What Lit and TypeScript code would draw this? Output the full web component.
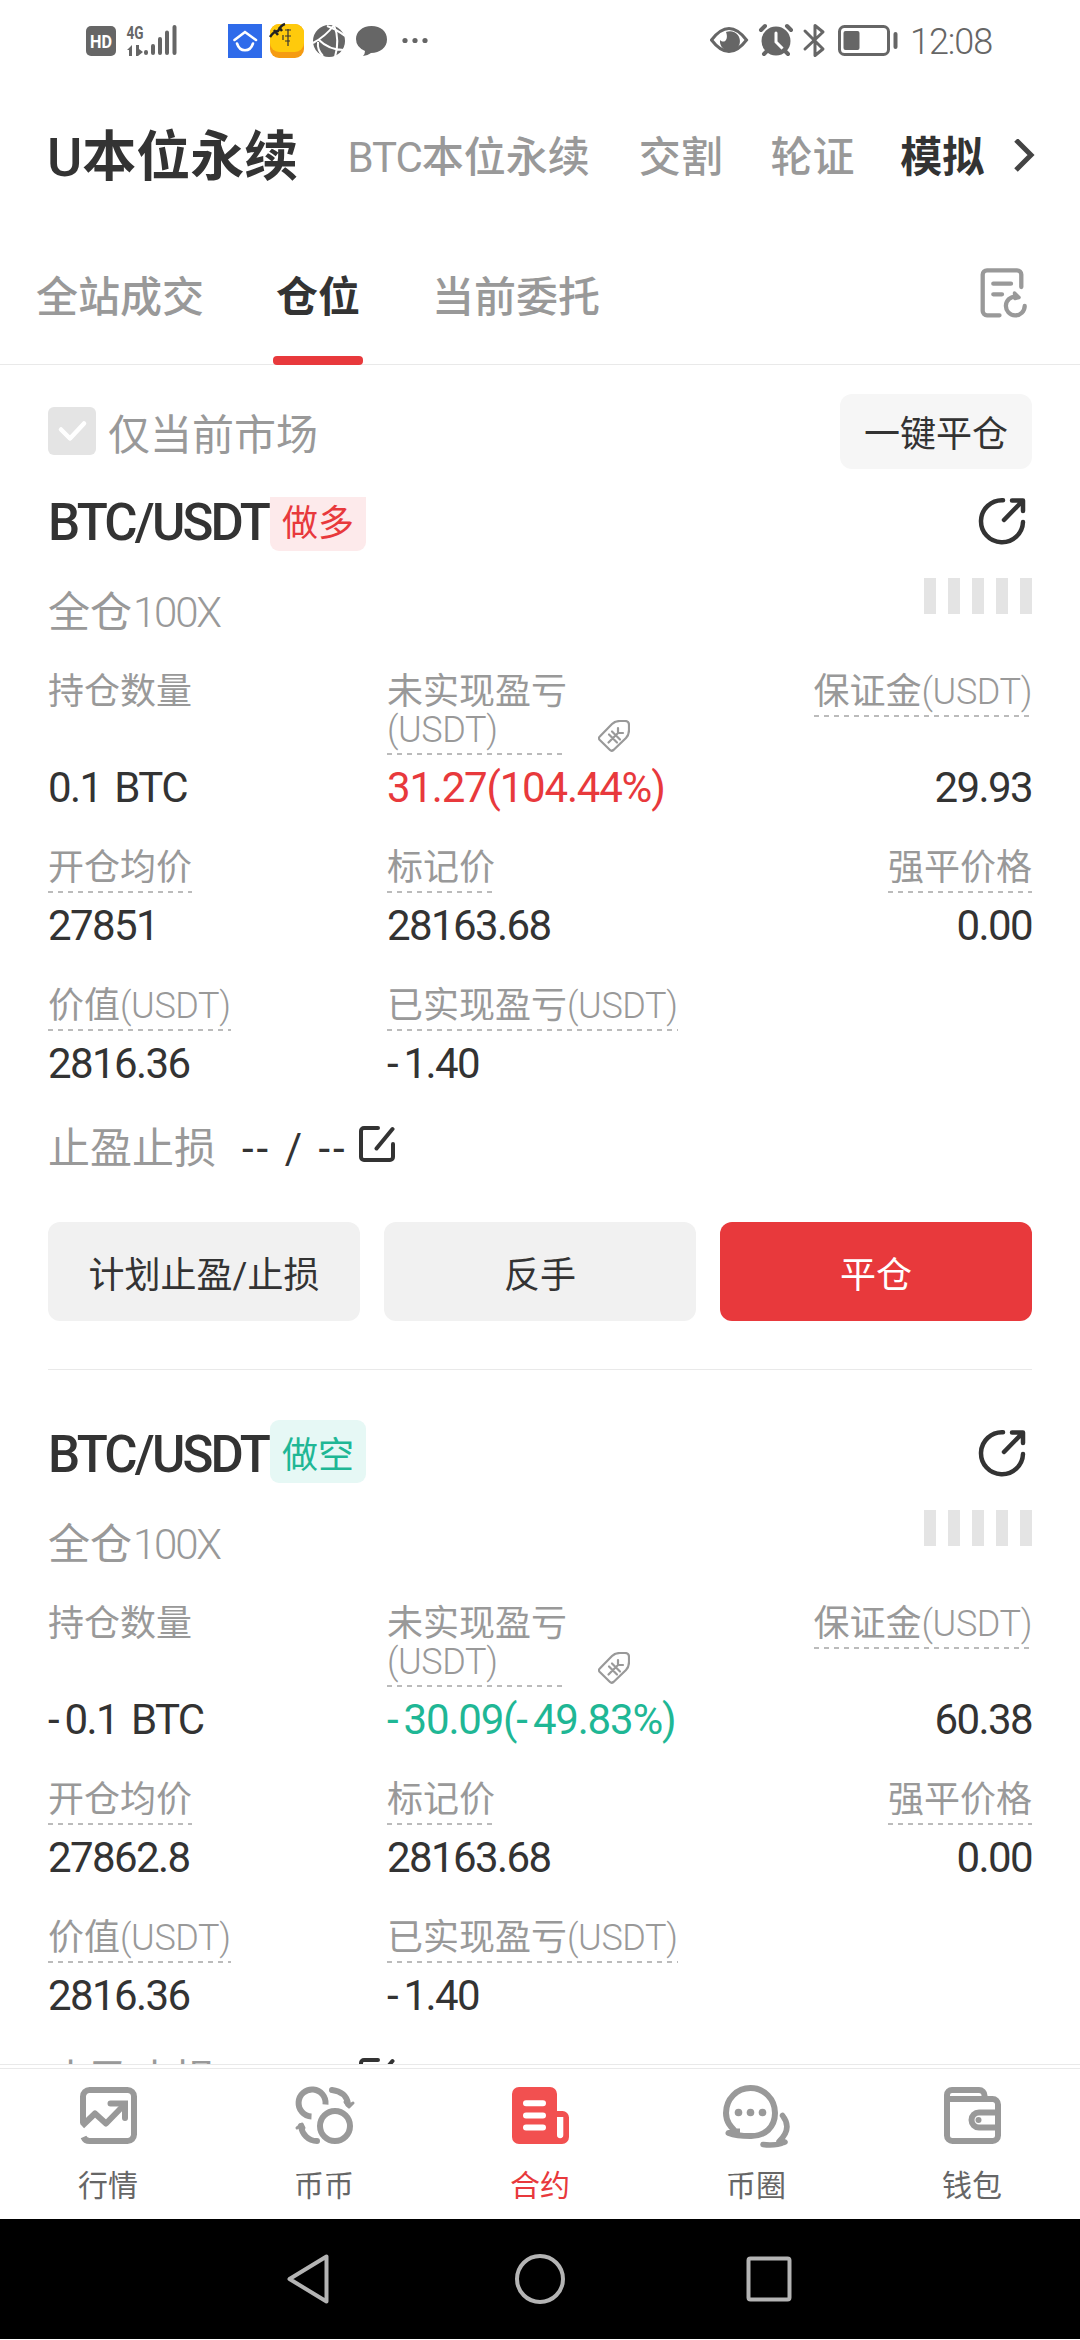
import { LitElement, html, svg, css } from "lit";
import { customElement, property } from "lit/decorators.js";

interface Position {
  side: "long" | "short";
  sideText: string;
  amount: string;
  pnl: string;
  margin: string;
  entry: string;
  mark: string;
  liquidation: string;
  worth: string;
  realised: string;
}

const POSITIONS: Position[] = [
  {
    side: "long", sideText: "做多", amount: "0.1 BTC", pnl: "31.27(104.44%)", margin: "29.93",
    entry: "27851", mark: "28163.68", liquidation: "0.00", worth: "2816.36", realised: "-1.40",
  },
  {
    side: "short", sideText: "做空", amount: "-0.1 BTC", pnl: "-30.09(-49.83%)", margin: "60.38",
    entry: "27862.8", mark: "28163.68", liquidation: "0.00", worth: "2816.36", realised: "-1.40",
  },
];

const NAV = [
  {
    label: "行情",
    icon: svg`<path d="M11 43V16.500a6.500 6.500 0 0 1 6.500-6.500h38a6.500 6.500 0 0 1 6.500 6.500v38a6.500 6.500 0 0 1-6.500 6.500h-38a6.500 6.500 0 0 1-6-4"/>
      <path d="M10 46L23 33.500 34 43.500 52 25" stroke-linejoin="round"/>
      <path d="M38.500 23.500H53V38" stroke-linecap="round"/>`,
  },
  {
    label: "币币",
    icon: svg`<path d="M37.500 24.500A13.500 13.500 0 1 0 23.500 36.500"/>
      <circle cx="47" cy="46" r="15"/>
      <path d="M44 10C53 11 59 16 60 24M29 61C20 61 14 54 13 46" stroke-linecap="round"/>
      <path d="M57 22l3 4 5-3-4 4zM16 48l-2-4-5 4 4-2z" stroke-width="3" stroke-linejoin="round"/>`,
  },
  {
    label: "合约",
    icon: svg`<path d="M15 7H46a7 7 0 0 1 7 7V31H58.500a6.500 6.500 0 0 1 6.500 6.500V57a7 7 0 0 1-7 7H15a7 7 0 0 1-7-7V14a7 7 0 0 1 7-7z" fill="currentColor" stroke="none"/>
      <path d="M22 23.300H39M22 35.500H39M22 47.500H39" stroke="#fff" stroke-linecap="round"/>
      <path d="M53 37h6.300v18a3.150 3.150 0 0 1-6.300 0z" fill="#fff" stroke="none"/>`,
    active: true,
  },
  {
    label: "币圈",
    icon: svg`<path d="M15 51C11 47 6 42 6 33 6 19 17 8 30.500 8S55 19 55 33 45 56.500 30 56C21 56 14 55 8.500 53 12 53 16 52.500 17 52V48.500" stroke-linejoin="round"/>
      <path d="M62.500 35.500C70 45 67 54 59 61.500c2 1.500 4 1.500 6 .5-7 3-15 3.500-22 2.500" stroke-width="5.500" stroke-linecap="round" stroke-linejoin="round"/>
      <g fill="currentColor" stroke="none"><circle cx="18.500" cy="32.500" r="3.800"/><circle cx="30.500" cy="32.500" r="3.800"/><circle cx="42.500" cy="32.500" r="3.800"/></g>`,
  },
  {
    label: "钱包",
    icon: svg`<path d="M11 19V15a5 5 0 0 1 5-5H43a5.500 5.500 0 0 1 5.500 5.500v3.500M11 19H56.500a5.500 5.500 0 0 1 5.500 5.500V55.500a5.500 5.500 0 0 1-5.500 5.500H16.500a5.500 5.500 0 0 1-5.500-5.500z"/>
      <path d="M61 32.500H43a7.500 7.500 0 0 0 0 15H61"/>
      <circle cx="42.500" cy="40" r="3" fill="currentColor" stroke="none"/>`,
  },
];

/** Latin runs are set tighter than the Chinese text around them. */
const latin = (text: string) => html`<span class="latin">${text}</span>`;

/** Figures with a widened minus sign. */
const figure = (text: string) =>
  text.split("-").map((part, i) => (i ? html`<span class="minus">-</span>${part}` : part));

const base = css`
  * { box-sizing: border-box; }
  svg { display: block; flex: none; }
`;

@customElement("status-bar")
class StatusBar extends LitElement {
  static styles = [base, css`
    :host { display: flex; justify-content: space-between; height: 80px; padding: 20px 88px 0 86px; color: #666; }
    .side { display: flex; height: 42px; }
    .clock { font-size: 36px; line-height: 45px; letter-spacing: -1.1px; margin-left: 12px; font-weight: 300; }
    .net { font: 700 19px/19px Roboto, sans-serif; }
  `];
  render() {
    return html`
      <div class="side">
        <svg width="344" height="42" viewBox="0 0 344 42" fill="currentColor">
          <rect x="0" y="6" width="30" height="30" rx="5"/>
          <text x="15" y="27.500" text-anchor="middle" fill="#fff" font-family="Roboto" font-weight="700" font-size="18" textLength="22" lengthAdjust="spacingAndGlyphs">HD</text>
          <text x="40.500" y="18.500" class="net" textLength="17" lengthAdjust="spacingAndGlyphs">4G</text>
          <path d="M41 30l5-5v11h-3v-6zM50 25h3v4l4 3-5 4h-2z"/>
          <g stroke="currentColor" stroke-width="4" stroke-linecap="round">
            <path d="M60 32v1M67 26v7M74 19v14M81 12.500v20.500M88.500 7v26"/>
          </g>
          <rect x="142" y="4" width="34" height="34" fill="#2f6bea"/>
          <g fill="none" stroke="#fff" stroke-width="2.600" stroke-linecap="round">
            <path d="M148.500 20L159 12l11 8"/><path d="M151 23.500c3 9 13 9 16 0"/>
          </g>
          <rect x="184" y="4" width="34" height="34" rx="9" fill="#f59b12"/>
          <rect x="184" y="4" width="34" height="28" rx="9" fill="#ffca0c"/>
          <path d="M184 17q4-6 8-6 3-6 7-7M188 10l4 5M193 7l3 4" stroke="#222" stroke-width="2.500" fill="none"/>
          <path d="M199 10h6M202 9v17M199 16h6M197 15v5M199 21h5" stroke="#333" stroke-width="1.200" fill="none"/>
          <circle cx="243" cy="21" r="16"/>
          <g fill="none" stroke="#fff" stroke-width="2"><path d="M227 23Q240 16 248 5M248 5Q254 20 249 37M233 20Q243 30 258 30M241 6Q250 9 259 16M232 22Q231 30 237 36"/></g>
          <path d="M285.500 6C295 6 301 11.500 301 19.500S294 33 285 33q-4 3-8 3 2-2 2-5-9-4-9-12c0-7 6-13 15.500-13z"/>
          <circle cx="319" cy="20.500" r="2.600"/><circle cx="329" cy="20.500" r="2.600"/><circle cx="339" cy="20.500" r="2.600"/>
        </svg>
      </div>
      <div class="side">
        <svg width="188" height="42" viewBox="0 0 188 42" fill="none" stroke="currentColor" stroke-width="3">
          <path d="M1.500 20Q19-3 36.500 20 19 43 1.500 20z"/>
          <path d="M16 12a10 10 0 1 1-6 8c4 4 9 0 6-8z" fill="currentColor" stroke="none"/>
          <circle cx="66" cy="21" r="14.500" fill="currentColor" stroke="none"/>
          <path d="M66 13v9l6 6" stroke="#fff" stroke-linecap="round"/>
          <path d="M51 10l4-4M77 6l4 4M54 34l4-4M78 34l-4-4" stroke-width="4" stroke-linecap="round"/>
          <path d="M95 11l18 18-8 6.500V5.500l8 6.500-18 17" stroke-linejoin="round" stroke-linecap="round"/>
          <rect x="129.500" y="6.500" width="49" height="28" rx="5"/>
          <rect x="133.500" y="11" width="16" height="19" rx="2" fill="currentColor" stroke="none"/>
          <rect x="183.500" y="12" width="4" height="17" rx="2" fill="currentColor" stroke="none"/>
        </svg>
        <span class="clock">12:08</span>
      </div>`;
  }
}

@customElement("position-card")
class PositionCard extends LitElement {
  @property({ attribute: false }) position!: Position;

  static styles = [base, css`
    :host { display: block; height: 932px; color: #333; }
    .title, .leverage-row, .tpsl, .buttons { display: flex; }
    .title { height: 63px; }
    .pair { width: 222px; padding: 6px 0 0; font-size: 51px; line-height: 57px; font-weight: 500; letter-spacing: -2.8px; white-space: nowrap; }
    .tag { height: 63px; width: 96px; border-radius: 9px; padding-top: 5px; text-align: center; font-size: 36px; line-height: 63px; }
    .long .tag { background: #fdeaeb; color: #e8393c; }
    .short .tag { background: #e6f8f5; color: #1fb795; }
    .long .pnl { color: #e8393c; }
    .short .pnl { color: #1fb795; }
    .share { margin: 9px 6px 0 auto; }
    .leverage-row { justify-content: space-between; margin-top: 27px; height: 70px; }
    .leverage { color: #999; font-size: 42px; line-height: 70px; }
    .leverage .latin { font-weight: 300; letter-spacing: -2.2px; margin-left: 1px; }
    .bars { display: flex; gap: 12px; height: 36px; }
    .bar { width: 12px; background: #e4e4e4; }
    .grid { display: grid; grid-template-columns: 339px 339px 1fr; row-gap: 35px; margin-top: 24px; }
    .cell { display: flex; flex-direction: column; align-items: flex-start; justify-content: space-between; }
    .cell.end { align-items: flex-end; }
    .label-row { display: flex; align-items: flex-end; }
    .label { color: #999; font-size: 36px; line-height: 38px; padding: 1px 0 6px; white-space: nowrap; }
    .label .latin { font-weight: 300; letter-spacing: -.4px; }
    .hint { background: repeating-linear-gradient(90deg, #bbb 0 5px, transparent 5px 10px) bottom left / 100% 2px no-repeat; }
    .narrow { width: 176px; }
    .price-tag { margin: 0 0 3px 35px; }
    .value { margin-top: 8px; font-size: 42px; line-height: 50px; letter-spacing: -1.6px; word-spacing: 4px; white-space: nowrap; }
    .pnl { letter-spacing: -1.2px; }
    .minus { letter-spacing: 5px; }
    .tpsl { margin-top: 30px; height: 60px; font-size: 42px; line-height: 60px; }
    .tpsl-label { color: #999; }
    .tpsl-value { margin-left: 26px; width: 117px; letter-spacing: 3px; white-space: nowrap; }
    .edit { margin-top: 7px; }
    .buttons { gap: 24px; margin-top: 43px; }
    .button { flex: 1; height: 99px; border-radius: 12px; background: #f1f1f1; padding-top: 5px; text-align: center; font-size: 36px; line-height: 99px; }
    .primary { background: #e8393c; color: #fff; }
    .rule { margin-top: 48px; height: 1px; background: #e9e9e9; }
  `];

  private cell(label: unknown, value: string, opts: { hint?: boolean; end?: boolean } = {}) {
    const { hint = true, end = false } = opts;
    return html`<div class="cell ${end ? "end" : ""}">
      <div class="label ${hint ? "hint" : ""}">${label}</div>
      <div class="value">${figure(value)}</div>
    </div>`;
  }

  render() {
    const p = this.position;
    const unit = latin("(USDT)");
    return html`<div class=${p.side}>
      <div class="title">
        <span class="pair">BTC/USDT</span><span class="tag">${p.sideText}</span>
        <svg class="share" width="48" height="48" viewBox="0 0 48 48" fill="none" stroke="#333" stroke-width="4.500" stroke-linecap="round" stroke-linejoin="round">
          <path d="M25 3.300A21 21 0 1 0 45 25"/><path d="M26 23L44 4.500M34 3.500H45V14"/>
        </svg>
      </div>
      <div class="leverage-row">
        <span class="leverage">全仓${latin("100X")}</span>
        <div class="bars">${[0, 1, 2, 3, 4].map(() => html`<i class="bar"></i>`)}</div>
      </div>
      <div class="grid">
        ${this.cell("持仓数量", p.amount, { hint: false })}
        <div class="cell">
          <div class="label-row">
            <div class="label hint narrow">未实现盈亏<br>${unit}</div>
            <svg class="price-tag" width="32" height="32" viewBox="0 0 32 32" fill="none" stroke="#999" stroke-width="2.200" stroke-linejoin="round" stroke-linecap="round">
              <path d="M1.800 16.500L14 4Q17 1 22 1H27Q31 1 31 5V10Q31 15 28 18L15.500 30Q13.500 31.500 12 30L1.800 20Q0 18 1.800 16.500z"/>
              <path d="M10.500 22.500L20 13M20 13V8M20 13H25M11 14.500L19 22.500M14 11.500L22 19.500"/>
            </svg>
          </div>
          <div class="value pnl">${figure(p.pnl)}</div>
        </div>
        ${this.cell(html`保证金${unit}`, p.margin, { end: true })}
        ${this.cell("开仓均价", p.entry)}
        ${this.cell("标记价", p.mark)}
        ${this.cell("强平价格", p.liquidation, { end: true })}
        ${this.cell(html`价值${unit}`, p.worth)}
        ${this.cell(html`已实现盈亏${unit}`, p.realised)}
      </div>
      <div class="tpsl">
        <span class="tpsl-label">止盈止损</span><span class="tpsl-value">-- / --</span>
        <svg class="edit" width="36" height="36" viewBox="0 0 36 36" fill="none" stroke="#333" stroke-width="4" stroke-linecap="round">
          <path d="M19 2H5a3 3 0 0 0-3 3v26a3 3 0 0 0 3 3h26a3 3 0 0 0 3-3V18M33.500 3L17.500 22.500"/>
        </svg>
      </div>
      <div class="buttons">
        <div class="button">计划止盈/止损</div>
        <div class="button">反手</div>
        <div class="button primary">平仓</div>
      </div>
      <div class="rule"></div>
    </div>`;
  }
}

@customElement("app-root")
class AppRoot extends LitElement {
  static styles = [base, css`
    :host { display: flex; flex-direction: column; width: 1080px; height: 2340px; background: #fff; color: #333; overflow: hidden;
      font-family: Roboto, "Noto Sans CJK SC", sans-serif; }
    .markets { display: flex; align-items: center; height: 156px; padding: 0 44px 0 48px; font-size: 42px; line-height: 60px; font-weight: 500; color: #999; white-space: nowrap; }
    .market-main { width: 300px; font-size: 54px; color: #333; font-weight: 700; }
    .market-main .latin { font-weight: 500; margin-left: -1px; }
    .btc { width: 292px; }
    .btc .latin { font-weight: 400; letter-spacing: -1px; }
    .market { width: 132px; }
    .demo { width: 112px; color: #333; font-weight: 700; margin-left: -2px; }
    .tabs { display: flex; height: 129px; padding: 0 50px 0 36px; border-bottom: 1px solid #e9e9e9; font-size: 42px; line-height: 124px; font-weight: 500; color: #999; }
    .tab { position: relative; margin-right: 72px; }
    .tab.current { color: #333; font-weight: 700; }
    .tab.current::after { content: ""; position: absolute; left: -3px; right: -3px; bottom: -1px; height: 9px; border-radius: 4px; background: #e8393c; }
    .records { margin: 30px 0 0 auto; }
    .filter { display: flex; align-items: center; height: 132px; padding: 0 48px; color: #999; font-size: 42px; line-height: 60px; }
    .check { display: flex; width: 48px; height: 48px; border-radius: 6px; background: #e4e4e4; margin-right: 12px; }
    .filter-text { padding-top: 10px; }
    .close-all { margin-left: auto; width: 192px; height: 75px; border-radius: 12px; background: #f6f6f6; color: #333; font-size: 36px; line-height: 75px; padding-top: 4px; text-align: center; }
    .list { height: 1568px; overflow: hidden; padding: 0 48px; border-bottom: 1px solid #e9e9e9; }
    .scroll { margin-top: -9px; }
    .nav { display: grid; grid-template-columns: repeat(5, 1fr); height: 151px; margin-top: 3px; border-top: 1px solid #e9e9e9; }
    .nav-item { display: flex; flex-direction: column; align-items: center; padding-top: 11px; color: #999; }
    .nav-label { font-size: 30px; line-height: 40px; margin-top: 14px; color: #666; }
    .nav-item.active { color: #f25050; }
    .active .nav-label { color: #e8393c; }
    .system { display: flex; align-items: center; justify-content: center; height: 120px; background: #000; }
  `];

  render() {
    return html`
      <status-bar></status-bar>
      <div class="markets">
        <span class="market-main">${latin("U")}本位永续</span>
        <span class="btc">${latin("BTC")}本位永续</span>
        <span class="market">交割</span>
        <span class="market">轮证</span>
        <span class="demo">模拟</span>
        <svg width="24" height="38" viewBox="0 0 24 38" fill="none" stroke="#444" stroke-width="5"><path d="M4 1L19 16 4 31"/></svg>
      </div>
      <div class="tabs">
        <span class="tab">全站成交</span>
        <span class="tab current">仓位</span>
        <span class="tab">当前委托</span>
        <svg class="records" width="52" height="54" viewBox="0 0 52 54" fill="none" stroke="#999" stroke-width="4.300" stroke-linecap="round" stroke-linejoin="round">
          <path d="M21.500 49.300H9a4.300 4.300 0 0 1-4.300-4.300V8.600a4.300 4.300 0 0 1 4.300-4.300h30a4.300 4.300 0 0 1 4.300 4.300v12.500M15.300 17.700H33M15.300 28.300H24"/>
          <path d="M46.700 40A9.400 9.400 0 1 1 38 30.600"/>
          <path d="M36.500 27l4.500 4.500-4 1z" fill="#999" stroke-width="3.500"/>
        </svg>
      </div>
      <div class="filter">
        <span class="check"><svg width="48" height="48" viewBox="0 0 48 48" fill="none" stroke="#fff" stroke-width="4.500" stroke-linecap="round" stroke-linejoin="round"><path d="M13 22.500l9 9 14-15"/></svg></span>
        <span class="filter-text">仅当前市场</span>
        <span class="close-all">一键平仓</span>
      </div>
      <div class="list"><div class="scroll">
        ${POSITIONS.map((p) => html`<position-card .position=${p}></position-card>`)}
      </div></div>
      <div class="nav">
        ${NAV.map((n) => html`<div class="nav-item ${n.active ? "active" : ""}">
          <svg width="72" height="72" viewBox="0 0 72 72" fill="none" stroke="currentColor" stroke-width="6">${n.icon}</svg>
          <span class="nav-label">${n.label}</span>
        </div>`)}
      </div>
      <div class="system">
        <svg width="510" height="60" viewBox="0 0 510 60" fill="none" stroke="#b4b4b4" stroke-width="4" stroke-linejoin="round">
          <path d="M4.500 30L41.500 7.500V52.500z"/>
          <circle cx="255" cy="30" r="23"/>
          <rect x="463.500" y="9.500" width="41" height="41" rx="2"/>
        </svg>
      </div>`;
  }
}
